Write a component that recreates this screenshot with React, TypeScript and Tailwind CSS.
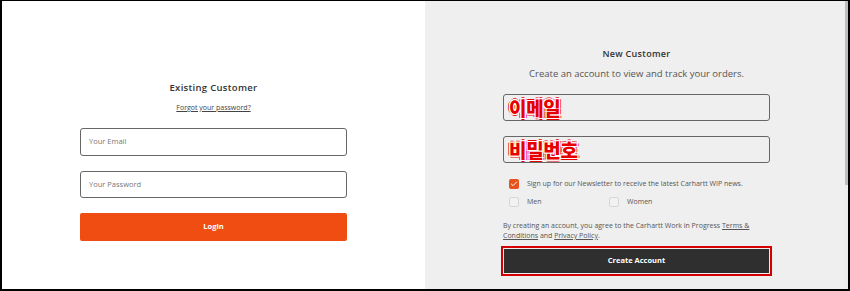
import { Check } from "lucide-react";

const font = { fontFamily: '"Open Sans", "Noto Sans CJK KR", sans-serif' };

function KoreanField({ label }: { label: string }) {
  return (
    <div className="flex h-[27px] w-[267px] items-center rounded-[3px] border border-[#666] bg-[#efefef] pl-[5px]">
      <span
        className="text-[19px] font-black leading-none tracking-[-0.3px] text-[#e60000] [font-family:'Noto_Sans_CJK_KR',sans-serif] [text-shadow:1px_0_0_#fff,-1px_0_0_#fff,0_1px_0_#fff,0_-1px_0_#fff,1px_1px_0_#fff,-1px_-1px_0_#fff,1px_-1px_0_#fff,-1px_1px_0_#fff,2px_0_0_#e60000,-2px_0_0_#e60000,0_2px_0_#e60000,0_-2px_0_#e60000]"
      >
        {label}
      </span>
    </div>
  );
}

function Box({ checked }: { checked?: boolean }) {
  if (checked) {
    return (
      <span className="flex h-[10px] w-[10px] items-center justify-center rounded-[2px] bg-[#e8531d]">
        <Check size={8} strokeWidth={3} color="#fff" />
      </span>
    );
  }
  return <span className="h-[10px] w-[10px] rounded-[2px] border border-[#d6d6d6] bg-[#f2f2f2]" />;
}

export default function App() {
  return (
    <div
      style={font}
      className="flex h-[291px] w-[850px] border-t border-r-2 border-b-2 border-l-2 border-black bg-white text-[#333]"
    >
      <section className="flex w-[423px] flex-col items-center bg-white pt-[80px]">
        <h2 className="text-[9.5px] font-semibold leading-[14px] tracking-[0.3px] text-[#333]">
          Existing Customer
        </h2>
        <a className="mt-[8px] text-[7px] leading-[10px] text-[#444] underline">Forgot your password?</a>
        <div className="mt-[15px] flex h-[28px] w-[267px] items-center rounded-[3px] border border-[#666] pl-[8px] text-[7.5px] text-[#777]">
          Your Email
        </div>
        <div className="mt-[15px] flex h-[27px] w-[267px] items-center rounded-[3px] border border-[#666] pl-[8px] text-[7.5px] text-[#777]">
          Your Password
        </div>
        <button className="mt-[15px] flex h-[28px] w-[267px] items-center justify-center rounded-[2px] bg-[#f04d12] text-[7.5px] font-bold text-white">
          Login
        </button>
      </section>

      <section className="flex flex-1 bg-[#efefef]">
        <div className="flex flex-1 flex-col items-center pt-[47px] pl-[3px]">
          <h2 className="text-[9px] font-semibold leading-[12px] tracking-[0.3px] text-[#333]">New Customer</h2>
          <p className="mt-[8px] text-[9.5px] leading-[12px] text-[#555]">
            Create an account to view and track your orders.
          </p>
          <div className="mt-[14px] flex flex-col gap-[15px]">
            <KoreanField label="이메일" />
            <KoreanField label="비밀번호" />
          </div>
          <div className="mt-[16px] flex w-[267px] flex-col gap-[7px] pl-[6px] text-[7px] text-[#555]">
            <div className="flex items-center gap-[8px]">
              <Box checked />
              <span>Sign up for our Newsletter to receive the latest Carhartt WIP news.</span>
            </div>
            <div className="flex items-center">
              <div className="flex w-[100px] items-center gap-[8px]">
                <Box />
                <span>Men</span>
              </div>
              <div className="flex items-center gap-[8px]">
                <Box />
                <span>Women</span>
              </div>
            </div>
          </div>
          <p className="mt-[14px] w-[267px] text-[7px] leading-[10px] text-[#555]">
            By creating an account, you agree to the Carhartt Work in Progress <a className="underline">Terms &amp;</a>
            <br />
            <a className="underline">Conditions</a> and <a className="underline">Privacy Policy</a>.
          </p>
          <div className="mt-[5px] w-[271px] border-2 border-[#d40000] p-[1px]">
            <button className="flex h-[24px] w-full items-center justify-center bg-[#2f2f2f] text-[7.5px] font-bold text-white">
              Create Account
            </button>
          </div>
        </div>
        <div className="flex w-[3px] flex-col">
          <div className="h-[184px] bg-[#bdbdbd]" />
          <div className="flex-1 bg-[#ececec]" />
        </div>
      </section>
    </div>
  );
}
